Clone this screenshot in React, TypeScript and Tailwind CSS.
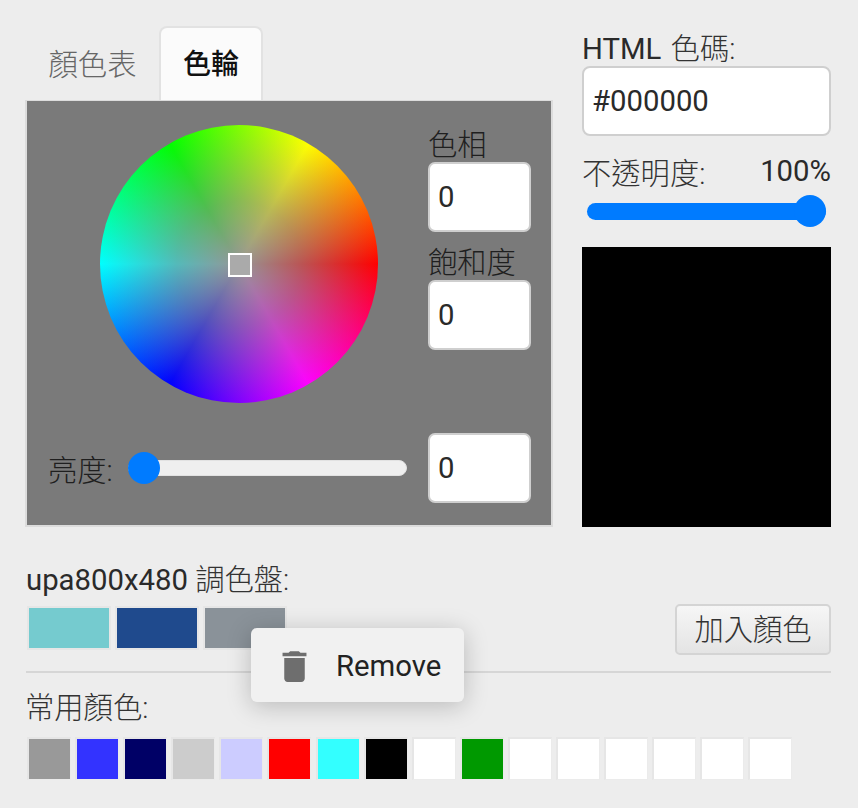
const recent = ['#999999','#3333ff','#000066','#cccccc','#ccccff','#ff0000','#33ffff','#000000','#ffffff','#009900','#ffffff','#ffffff','#ffffff','#ffffff','#ffffff','#ffffff'];

function NumberBox({ value }: { value: string }) {
  return (
    <div className="flex h-[70px] w-[103px] items-center rounded-[7px] border-2 border-[#cfcfcf] bg-white pl-[8px] text-[#2a2a2a]">
      {value}
    </div>
  );
}

function Cjk({ children }: { children: string }) {
  return <span className="font-light text-[#333]">{children}</span>;
}

function PanelLabel({ children }: { children: string }) {
  return <span className="font-light text-[#1f1f1f]">{children}</span>;
}

export default function App() {
  return (
    <div className="relative h-[808px] w-[858px] overflow-hidden bg-[#ededed] pl-[26px] pr-[27px] pt-[27px] font-['Roboto','Noto_Sans_CJK_TC',sans-serif] text-[29.3px] leading-[34px] text-[#2a2a2a]">
      <div className="flex h-[500px] gap-[29px]">
        <div className="ml-[-1px] flex w-[528px] flex-col">
          <div className="flex h-[73px] items-end pl-[1px]">
            <div className="flex h-[73px] w-[133px] items-center justify-center pt-[3px] font-light text-[#666]">顏色表</div>
            <div className="flex h-[74px] w-[104px] items-center justify-center rounded-t-[8px] border-2 border-b-0 border-[#e2e2e2] bg-[#fbfbfb] pt-[2px] text-[28px] font-medium text-[#111]">色輪</div>
          </div>
          <div className="flex h-[427px] flex-col border-2 border-t border-[#dcdcdc] bg-[#7a7a7a]">
            <div className="flex pl-[73px] pt-[24px]">
              <div className="relative h-[278px] w-[278px] rounded-full bg-[conic-gradient(from_90deg,#ff0000,#ff00ff,#0000ff,#00ffff,#00ff00,#ffff00,#ff0000)]">
                <div className="absolute inset-0 rounded-full bg-[radial-gradient(circle_closest-side,rgba(150,150,150,1)_0%,rgba(140,140,140,0.6)_45%,rgba(130,130,130,0)_100%)]"></div>
                <div className="absolute left-[128px] top-[128px] h-[24px] w-[24px] border-[2px] border-white bg-[#aaaaaa]"></div>
              </div>
              <div className="ml-[50px] flex flex-col">
                <div className="mt-[3px] flex h-[34px] items-center"><PanelLabel>色相</PanelLabel></div>
                <NumberBox value="0" />
                <div className="mt-[13px] flex h-[35px] items-center pt-[1px]"><PanelLabel>飽和度</PanelLabel></div>
                <NumberBox value="0" />
              </div>
            </div>
            <div className="mt-[30px] flex items-center">
              <div className="ml-[21px] w-[80px] pt-[5px]"><PanelLabel>亮度:</PanelLabel></div>
              <div className="relative h-[16px] w-[279px] rounded-full border border-[#e2e2e2] bg-[#efefef]">
                <div className="absolute left-[-1px] top-[-9px] h-[32px] w-[32px] rounded-full bg-[#007bff]"></div>
              </div>
              <div className="ml-[21px]"><NumberBox value="0" /></div>
            </div>
          </div>
        </div>

        <div className="flex w-[249px] flex-col">
          <div className="mt-[3px] flex h-[36px] items-center pt-[2px]">HTML&nbsp;<span className="ml-[2px]"><Cjk>色碼:</Cjk></span></div>
          <div className="flex h-[70px] items-center rounded-[8px] border-2 border-[#cfcfcf] bg-white pl-[8px]">#000000</div>
          <div className="mt-[20px] flex h-[36px] items-center justify-between">
            <Cjk>不透明度:</Cjk>
            <span className="pb-[7px]">100%</span>
          </div>
          <div className="relative ml-[5px] mt-[11px] h-[17px] w-[239px] rounded-full bg-[#007bff]">
            <div className="absolute right-0 top-[-8px] h-[32px] w-[32px] rounded-full bg-[#007bff]"></div>
          </div>
          <div className="mt-[27px] h-[280px] bg-black"></div>
        </div>
      </div>

      <div className="mt-[35px] flex h-[35px] items-center">upa800x480&nbsp;<Cjk>調色盤:</Cjk></div>
      <div className="flex h-[58px] items-start justify-between">
        <div className="mt-[9px] flex gap-[4px] pl-[1px]">
          <div className="h-[44px] w-[84px] border-2 border-[#e6e6e6] bg-[#75cbcf]"></div>
          <div className="h-[44px] w-[84px] border-2 border-[#e6e6e6] bg-[#1f4a8d]"></div>
          <div className="h-[44px] w-[84px] border-2 border-[#e6e6e6] bg-[#8a9299]"></div>
        </div>
        <div className="mt-[7px] flex h-[51px] w-[156px] items-center justify-center rounded-[5px] border-2 border-[#d4d4d4] bg-[linear-gradient(#f6f6f6,#e4e4e4)] font-light text-[#333]">加入顏色</div>
      </div>
      <div className="mt-[16px] h-[2px] bg-[#d6d6d6]"></div>
      <div className="mt-[17px] flex h-[36px] items-center"><span className="ml-[-1px]"><Cjk>常用顏色:</Cjk></span></div>
      <div className="mt-[11px] flex gap-[4.1px] pl-[1px]">
        {recent.map((c, i) => (
          <div key={i} className="h-[43px] w-[44px] border-t-2 border-r border-b border-l-2 border-t-[#e6e6e6] border-r-[#ebebeb] border-b-[#ebebeb] border-l-[#e6e6e6]" style={{ backgroundColor: c }}></div>
        ))}
      </div>

      <div className="absolute left-[251px] top-[628px] flex h-[74px] w-[213px] items-center rounded-[6px] bg-[#f1f1f1] pl-[23px] shadow-[0_4px_24px_rgba(0,0,0,0.22)]">
        <svg className="mt-[2px]" width="41" height="41" viewBox="0 0 24 24" fill="#6e6e6e" aria-hidden="true">
          <path d="M6 19c0 1.1.9 2 2 2h8c1.1 0 2-.9 2-2V7H6v12zM19 4h-3.5l-1-1h-5l-1 1H5v2h14V4z" />
        </svg>
        <span className="ml-[21px] pt-[1px] text-[#222]">Remove</span>
      </div>
    </div>
  );
}
